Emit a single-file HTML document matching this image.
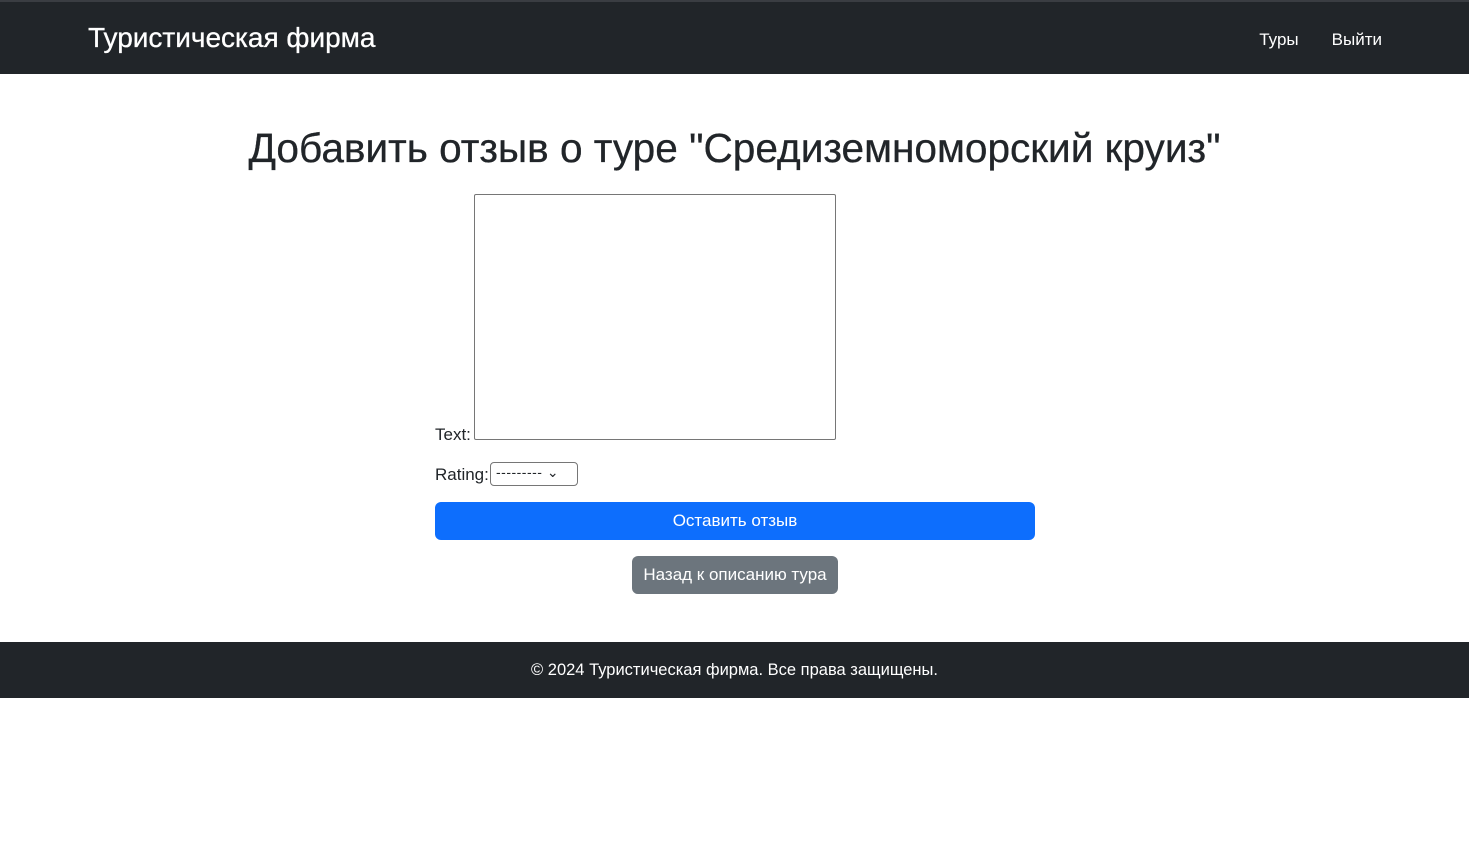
<!DOCTYPE html>
<html><head><meta charset="utf-8"><style>
*{box-sizing:border-box}
body{margin:0;font-family:"Liberation Sans","DejaVu Sans",sans-serif;color:#212529;background:#fff;width:1469px;height:845px;overflow:hidden}
.nav{position:absolute;top:0;left:0;width:1469px;height:74px;background:#212529;border-top:2px solid #3a3d42}
.brand{position:absolute;left:88px;top:20px;color:#fff;font-size:28px;font-weight:500;-webkit-text-stroke:0.3px #fff}
.links{position:absolute;right:87px;top:28px;color:#fff;font-size:17px}
.links span{margin-left:33px}
h1{position:absolute;top:125px;left:0;width:1469px;text-align:center;margin:0;font-weight:500;font-size:40.6px;-webkit-text-stroke:0.3px #212529}
.ta{position:absolute;left:474px;top:194px;width:362px;height:246px;border:1px solid #767676;border-radius:2px}
.lbl{position:absolute;font-size:17px}
.sel{position:absolute;left:490px;top:462px;width:88px;height:24px;border:1px solid #767676;border-radius:4px;font-size:14px;padding:1px 5px;letter-spacing:0.5px}
.b1{position:absolute;left:435px;top:502px;width:600px;height:38px;background:#0d6efd;border-radius:6px;color:#fff;font-size:17px;text-align:center;line-height:38px}
.b2{position:absolute;left:632px;top:556px;width:206px;height:38px;background:#6c757d;border-radius:6px;color:#fff;font-size:17px;text-align:center;line-height:38px}
.foot{position:absolute;top:642px;left:0;width:1469px;height:56px;background:#212529;color:#fff;font-size:16.5px;text-align:center;line-height:56px}
</style></head><body>
<div class="nav"><div class="brand">Туристическая фирма</div><div class="links"><span>Туры</span><span>Выйти</span></div></div>
<h1>Добавить отзыв о туре "Средиземноморский круиз"</h1>
<div class="lbl" style="left:435px;top:425px">Text:</div>
<div class="ta"></div>
<div class="lbl" style="left:435px;top:465px">Rating:</div>
<div class="sel">--------- ⌄</div>
<div class="b1">Оставить отзыв</div>
<div class="b2">Назад к описанию тура</div>
<div class="foot">© 2024 Туристическая фирма. Все права защищены.</div>
</body></html>
